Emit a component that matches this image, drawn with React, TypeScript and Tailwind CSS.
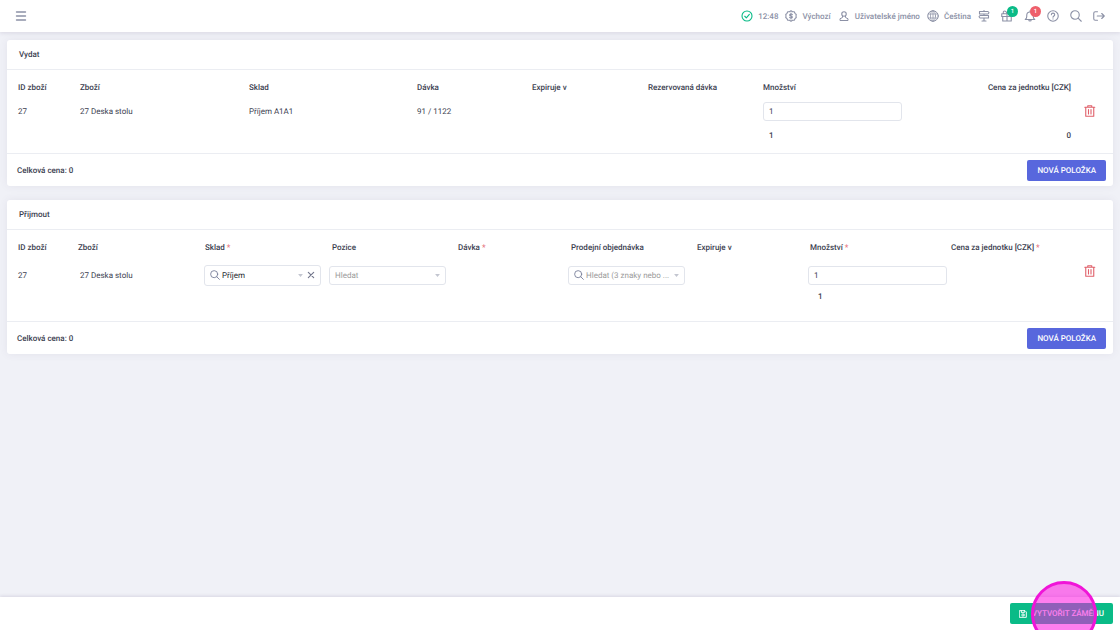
import { useState, type ReactNode } from "react";

type IconProps = { className?: string; children: ReactNode };

function Icon({ className = "size-3", children }: IconProps) {
  return (
    <svg
      viewBox="0 0 24 24"
      fill="none"
      stroke="currentColor"
      strokeWidth="2.2"
      strokeLinecap="round"
      strokeLinejoin="round"
      className={`shrink-0 ${className}`}
      aria-hidden="true"
    >
      {children}
    </svg>
  );
}

const MenuIcon = () => (
  <Icon>
    <path d="M3 4h18M3 12h18M3 20h18" strokeWidth="2.8" />
  </Icon>
);

const CheckIcon = () => (
  <Icon className="size-3 text-[#0abb87]">
    <circle cx="12" cy="12" r="10" />
    <path d="M7.5 12.5l3.2 3.2 6-7" />
  </Icon>
);

const DollarIcon = () => (
  <Icon>
    <path d="M12 1.5l3 2h3.500l1.500 3.200 2.500 2.300-.5 3 .5 3-2.500 2.300-1.500 3.200H15l-3 2-3-2H5.500L4 17.300 1.500 15l.5-3-.5-3L4 6.700 5.500 3.500H9z" />
    <path d="M14.800 9.300c-.4-.9-1.500-1.400-2.800-1.400-1.600 0-2.800.7-2.800 2 0 2.700 5.600 1.500 5.600 4.200 0 1.300-1.200 2-2.800 2-1.400 0-2.400-.5-2.800-1.400M12 6v12" />
  </Icon>
);

const UserIcon = () => (
  <Icon>
    <circle cx="12" cy="8" r="4.5" />
    <path d="M9 12.500v2.500L4 17.500V21h16v-3.500l-5-2.500v-2.500" strokeWidth="2" />
  </Icon>
);

const GlobeIcon = () => (
  <Icon>
    <circle cx="12" cy="12" r="10.5" strokeWidth="2" />
    <ellipse cx="12" cy="12" rx="5" ry="10.5" strokeWidth="1.5" />
    <path d="M2.500 8h19M2.500 16h19M12 1.500v21" strokeWidth="1.5" />
  </Icon>
);

const SignsIcon = () => (
  <Icon>
    <path d="M3 3h17l2 2.500-2 2.500H3zM21 11H4l-2 2.500 2 2.500h17zM12 1v2M12 8v3M12 16v6M8 22h8" />
  </Icon>
);

const GiftIcon = () => (
  <Icon>
    <path d="M1.500 7.500h21V13h-21zM3.500 13v9h17v-9M12 7.500V22M12 7.500c-1-4-3-5.500-5-5.500-3.200 0-3.500 4.500-.5 5.500M12 7.500c1-4 3-5.500 5-5.500 3.200 0 3.500 4.500.5 5.500" />
  </Icon>
);

const BellIcon = () => (
  <Icon>
    <path d="M12 1.500V4M2.500 19h19c-2-1.500-3-3-3-6v-2.500C18.500 6.500 15.800 4 12 4s-6.500 2.500-6.500 6.500V13c0 3-1 4.500-3 6zM9.500 19.500c0 3.500 5 3.500 5 0" />
  </Icon>
);

const HelpIcon = () => (
  <Icon>
    <circle cx="12" cy="12" r="10.5" />
    <path d="M8.700 9.500C8.700 7.500 10 6.300 12 6.300s3.400 1.200 3.400 3c0 2.500-3.400 2.700-3.400 5.200M12 17.600v.2" />
  </Icon>
);

const SearchIcon = ({ className }: { className?: string }) => (
  <Icon className={className}>
    <circle cx="10" cy="10" r="8.5" />
    <path d="M16.200 16.200l6.300 6.300" />
  </Icon>
);

const LogoutIcon = () => (
  <Icon>
    <path d="M9 3.500H4.500c-2 0-3 1-3 3v11c0 2 1 3 3 3H9M8.500 12h13.500M17.500 7l5 5-5 5" />
  </Icon>
);

const TrashIcon = () => (
  <Icon className="size-3 text-[#e0606a]">
    <path d="M1.500 4.500h20M7.500 4.500V1.500h8v3M3.500 4.500V22.500h16V4.500M9 9v9M14 9v9" />
  </Icon>
);

const SaveIcon = () => (
  <Icon className="size-2">
    <path d="M2 2h16l4 4v16H2zM7 2v6h9V2" strokeWidth="2.8" />
    <circle cx="12" cy="15" r="3.500" strokeWidth="2.8" />
  </Icon>
);

const ArrowIcon = () => (
  <svg viewBox="0 0 8 5" className="h-[3px] w-[5px] shrink-0 text-[#c3c6d0]" aria-hidden="true">
    <path d="M0 0h8L4 5z" fill="currentColor" />
  </svg>
);

type PanelProps = { title: string; children: ReactNode };

function Panel({ title, children }: PanelProps) {
  return (
    <section className="rounded-[3px] bg-white shadow-[0_0_8px_rgba(82,63,105,0.08)]">
      <h2 className="border-b border-[#ebedf2] px-3 text-[8px] leading-[29px] font-medium">{title}</h2>
      <div className="px-[5px] pt-[5px]">{children}</div>
      <div className="flex items-center justify-between border-t border-[#ebedf2] pt-1.5 pr-[7px] pb-[5px] pl-[10px]">
        <span className="font-medium">Celková cena: 0</span>
        <button type="button" className="h-[21px] rounded-xs bg-[#5867dd] px-[10px] font-medium text-white">
          NOVÁ POLOŽKA
        </button>
      </div>
    </section>
  );
}

type QuantityProps = { label: string; value: string; onChange: (value: string) => void };

function QuantityInput({ label, value, onChange }: QuantityProps) {
  return (
    <input
      type="text"
      aria-label={label}
      value={value}
      onChange={(e) => onChange(e.target.value)}
      className="block h-[19px] w-[139px] rounded-[3px] border border-[#e2e5ec] bg-white px-[5px] outline-none focus:border-[#9aabff]"
    />
  );
}

type SearchSelectProps = {
  label: string;
  placeholder: string;
  options?: string[];
  value: string;
  withIcon?: boolean;
  onChange: (value: string) => void;
};

function SearchSelect({ label, placeholder, options = [], value, withIcon, onChange }: SearchSelectProps) {
  return (
    <div
      className={`flex w-[117px] items-center rounded-[3px] border border-[#e2e5ec] bg-white px-[5px] ${
        value ? "h-[21px]" : "h-[19px]"
      }`}
    >
      {withIcon && (
        <span className="mr-0.5 flex text-[#7b819b]">
          <SearchIcon className="size-2.5" />
        </span>
      )}
      <select
        aria-label={label}
        value={value}
        onChange={(e) => onChange(e.target.value)}
        className={`min-w-0 flex-1 appearance-none bg-transparent outline-none ${
          value ? "text-[#212529]" : "text-[#9b9b9b]"
        }`}
      >
        <option value="">{placeholder}</option>
        {options.map((option) => (
          <option key={option} value={option}>
            {option}
          </option>
        ))}
      </select>
      <ArrowIcon />
      {value && (
        <button type="button" aria-label="Vymazat" onClick={() => onChange("")} className="ml-1 text-[#74788d]">
          <Icon className="size-2">
            <path d="M4 4l16 16M20 4L4 20" strokeWidth="3.5" />
          </Icon>
        </button>
      )}
    </div>
  );
}

const Required = () => <span className="text-[#e5737b]"> *</span>;

const issueColumns = [
  { title: "ID zboží", width: "w-[62px]" },
  { title: "Zboží", width: "w-[169px]" },
  { title: "Sklad", width: "w-[168px]" },
  { title: "Dávka", width: "w-[115px]" },
  { title: "Expiruje v", width: "w-[116px]" },
  { title: "Rezervovaná dávka", width: "w-[115px]" },
  { title: "Množství", width: "w-[208px]" },
  { title: "Cena za jednotku [CZK]", width: "w-[114px]", right: true },
];

const receiveColumns = [
  { title: "ID zboží", width: "w-[60px]" },
  { title: "Zboží", width: "w-[127px]" },
  { title: "Sklad", width: "w-[127px]", required: true },
  { title: "Pozice", width: "w-[126px]" },
  { title: "Dávka", width: "w-[113px]", required: true },
  { title: "Prodejní objednávka", width: "w-[126px]" },
  { title: "Expiruje v", width: "w-[113px]" },
  { title: "Množství", width: "w-[141px]", required: true },
  { title: "Cena za jednotku [CZK]", width: "w-[134px]", required: true },
];

function IssueTable() {
  const [quantity, setQuantity] = useState("1");

  return (
    <table className="mb-1.5 w-full table-fixed text-left">
      <thead>
        <tr className="h-6">
          {issueColumns.map((column) => (
            <th
              key={column.title}
              className={`font-medium whitespace-nowrap ${column.width} ${
                column.right ? "pr-2 text-right" : "px-1.5"
              }`}
            >
              {column.title}
            </th>
          ))}
          <th className="w-[29px]" />
        </tr>
      </thead>
      <tbody>
        <tr className="h-6">
          <td className="px-1.5">27</td>
          <td className="px-1.5">27 Deska stolu</td>
          <td className="px-1.5">Příjem A1A1</td>
          <td className="px-1.5">91 / 1122</td>
          <td />
          <td />
          <td className="px-1.5">
            <QuantityInput label="Množství k výdeji" value={quantity} onChange={setQuantity} />
          </td>
          <td />
          <td className="px-[5px]">
            <button type="button" aria-label="Smazat" className="block">
              <TrashIcon />
            </button>
          </td>
        </tr>
        <tr className="h-6 font-medium">
          <td colSpan={6} />
          <td className="px-3">1</td>
          <td className="pr-2 text-right">0</td>
          <td />
        </tr>
      </tbody>
    </table>
  );
}

function ReceiveTable() {
  const [stock, setStock] = useState("Příjem");
  const [position, setPosition] = useState("");
  const [order, setOrder] = useState("");
  const [quantity, setQuantity] = useState("1");

  return (
    <table className="mb-[19px] w-full table-fixed text-left">
      <thead>
        <tr className="h-6">
          {receiveColumns.map((column) => (
            <th key={column.title} className={`px-1.5 font-medium whitespace-nowrap ${column.width}`}>
              {column.title}
              {column.required && <Required />}
            </th>
          ))}
          <th className="w-[29px]" />
        </tr>
      </thead>
      <tbody>
        <tr className="h-8">
          <td className="px-1.5">27</td>
          <td className="px-2">27 Deska stolu</td>
          <td className="px-[5px]">
            <SearchSelect
              label="Sklad"
              placeholder="Hledat"
              options={["Příjem"]}
              value={stock}
              withIcon
              onChange={setStock}
            />
          </td>
          <td className="px-[3px]">
            <SearchSelect label="Pozice" placeholder="Hledat" value={position} onChange={setPosition} />
          </td>
          <td />
          <td className="px-[3px]">
            <SearchSelect
              label="Prodejní objednávka"
              placeholder="Hledat (3 znaky nebo ..."
              value={order}
              withIcon
              onChange={setOrder}
            />
          </td>
          <td />
          <td className="px-1">
            <QuantityInput label="Množství k příjmu" value={quantity} onChange={setQuantity} />
          </td>
          <td />
          <td className="px-[5px] pt-1.5 align-top">
            <button type="button" aria-label="Smazat" className="block">
              <TrashIcon />
            </button>
          </td>
        </tr>
        <tr className="font-medium">
          <td colSpan={7} />
          <td className="px-3.5">1</td>
          <td colSpan={2} />
        </tr>
      </tbody>
    </table>
  );
}

function TopBar() {
  return (
    <header className="flex h-8 items-center justify-between bg-white pr-[15px] pl-[15px] text-[#8c91a6] shadow-[0_1px_4px_rgba(82,63,105,0.15)]">
      <button type="button" aria-label="Menu">
        <MenuIcon />
      </button>
      <div className="flex items-center gap-[7px] font-medium">
        <div className="flex items-center gap-[5px]">
          <CheckIcon />
          <span>12:48</span>
        </div>
        <button type="button" className="flex items-center gap-[5px]">
          <DollarIcon />
          Výchozí
        </button>
        <button type="button" className="flex items-center gap-[5px]">
          <UserIcon />
          Uživatelské jméno
        </button>
        <button type="button" className="flex items-center gap-[5px]">
          <GlobeIcon />
          Čeština
        </button>
        <div className="flex items-center gap-[11px]">
          <button type="button" aria-label="Rozcestník">
            <SignsIcon />
          </button>
          <button type="button" aria-label="Novinky" className="relative">
            <GiftIcon />
            <span className="absolute -top-1 -right-[5px] flex size-[11px] items-center justify-center rounded-full bg-[#0abb87] text-[6px] text-white">
              1
            </span>
          </button>
          <button type="button" aria-label="Upozornění" className="relative">
            <BellIcon />
            <span className="absolute -top-1 -right-[5px] flex size-[11px] items-center justify-center rounded-full bg-[#ee5f6b] text-[6px] text-white">
              1
            </span>
          </button>
          <button type="button" aria-label="Nápověda">
            <HelpIcon />
          </button>
          <button type="button" aria-label="Hledat">
            <SearchIcon />
          </button>
          <button type="button" aria-label="Odhlásit">
            <LogoutIcon />
          </button>
        </div>
      </div>
    </header>
  );
}

export default function App() {
  return (
    <div className="flex min-h-screen flex-col overflow-hidden bg-[#f0f1f7] font-['Roboto',sans-serif] text-[8px] leading-[11px] text-[#3b3e50] [&_*]:[text-rendering:geometricPrecision]">
      <TopBar />
      <main className="flex flex-1 flex-col gap-3.5 px-[7px] py-2">
        <Panel title="Vydat">
          <IssueTable />
        </Panel>
        <Panel title="Přijmout">
          <ReceiveTable />
        </Panel>
      </main>
      <footer className="flex justify-end bg-white px-[7px] py-1.5 shadow-[0_-1px_3px_rgba(82,63,105,0.15)]">
        <div className="relative">
          <button
            type="button"
            className="flex h-[21px] items-center gap-[5px] rounded-xs bg-[#0abb87] px-[9px] font-medium text-white"
          >
            <SaveIcon />
            VYTVOŘIT ZÁMĚNU
          </button>
          {/* click highlight */}
          <span className="pointer-events-none absolute -top-[22px] right-4 size-[66px] rounded-full border-3 border-[#f014d8] bg-[#ff14e1]/55" />
        </div>
      </footer>
    </div>
  );
}
